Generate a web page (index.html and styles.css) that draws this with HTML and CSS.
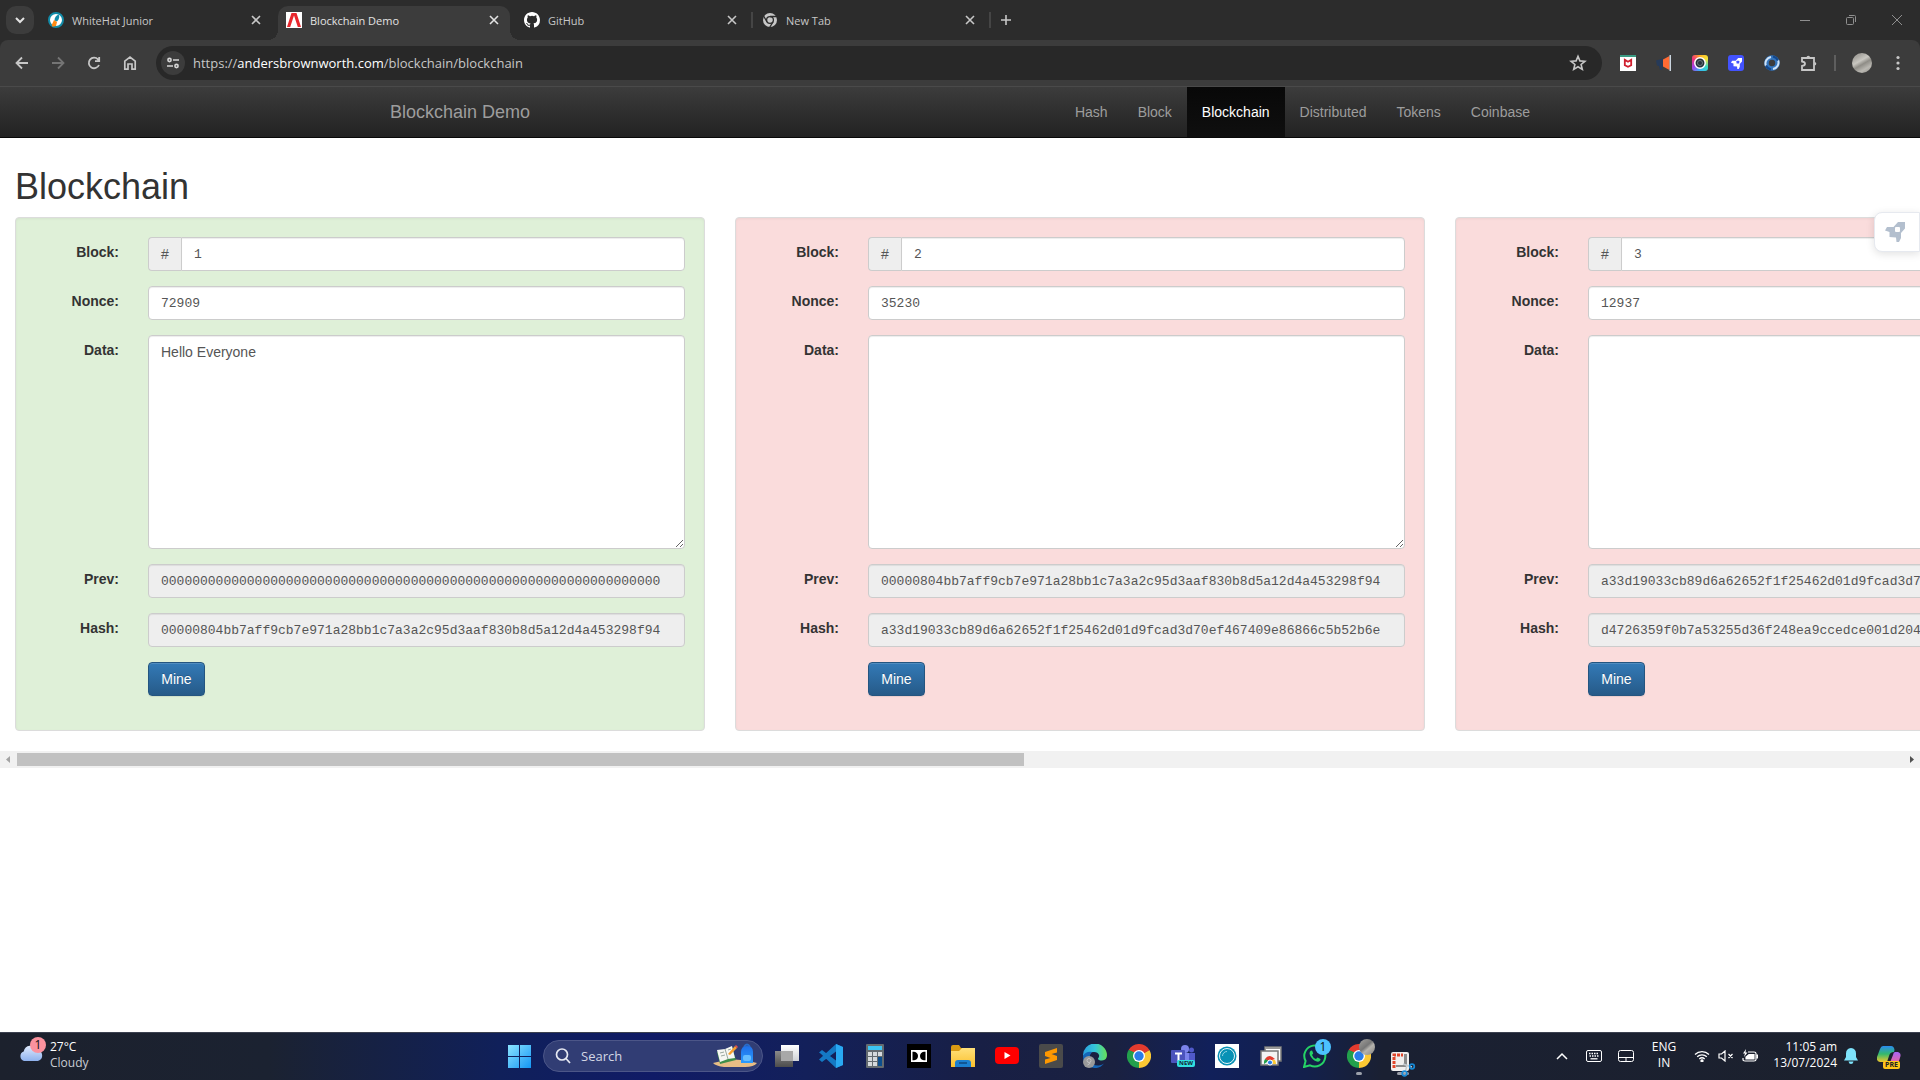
FILE: index.html
```html
<!DOCTYPE html>
<html lang="en">
<head>
<meta charset="utf-8">
<meta name="viewport" content="width=device-width, initial-scale=1">
<title>Blockchain Demo</title>
<link rel="stylesheet" href="styles.css">
</head>
<body>
<svg class="defs" aria-hidden="true">
  <defs>
    <linearGradient id="win" x1="0" y1="0" x2="1" y2="1"><stop offset="0" stop-color="#8be4ff"/><stop offset="1" stop-color="#1496f5"/></linearGradient>
    <linearGradient id="edgeA" x1="0" y1="0" x2="1" y2="0"><stop offset="0" stop-color="#2a9fe0"/><stop offset=".5" stop-color="#35c6d8"/><stop offset="1" stop-color="#66e257"/></linearGradient>
    <linearGradient id="cloud" x1="0" y1="0" x2="0" y2="1"><stop offset="0" stop-color="#dfeafc"/><stop offset="1" stop-color="#8fb2ee"/></linearGradient>
    <linearGradient id="folder" x1="0" y1="0" x2="0" y2="1"><stop offset="0" stop-color="#ffe07a"/><stop offset="1" stop-color="#fbc02d"/></linearGradient>
    <linearGradient id="pilotA" x1="0" y1="0" x2="0" y2="1"><stop offset="0" stop-color="#2a8cf0"/><stop offset=".5" stop-color="#34b96c"/><stop offset="1" stop-color="#f2c82a"/></linearGradient>
    <linearGradient id="pilotB" x1="0" y1="0" x2="0" y2="1"><stop offset="0" stop-color="#a765f5"/><stop offset="1" stop-color="#f5658c"/></linearGradient>
    <linearGradient id="bag" x1="0" y1="0" x2="0" y2="1"><stop offset="0" stop-color="#1f6fe8"/><stop offset="1" stop-color="#2a9bff"/></linearGradient>
    <linearGradient id="paper" x1="0" y1="0" x2="0" y2="1"><stop offset="0" stop-color="#ffffff"/><stop offset="1" stop-color="#cfd2d6"/></linearGradient>
    <linearGradient id="pane" x1="0" y1="0" x2="0" y2="1"><stop offset="0" stop-color="#8a8a8a"/><stop offset="1" stop-color="#4c4c4c"/></linearGradient>
  </defs>
  <symbol id="chrome" viewBox="0 0 24 24">
    <path fill="#e33b2e" d="M12 12 1.600 6A12 12 0 0 1 22.400 6Z"/>
    <path fill="#fcc934" d="M12 12 22.400 6A12 12 0 0 1 12 24Z"/>
    <path fill="#22a04c" d="M12 12 12 24A12 12 0 0 1 1.600 6Z"/>
    <path fill="#e33b2e" d="M12 6H22.400L17.200 9Z"/>
    <path fill="#22a04c" d="M6.800 15 1.600 6 9 9Z"/>
    <path fill="#fcc934" d="M17.200 15 12 24 12 17Z"/>
    <circle cx="12" cy="12" r="6" fill="#fff"/><circle cx="12" cy="12" r="4.700" fill="#2a7de9"/>
  </symbol>
  <symbol id="close" viewBox="0 0 16 16"><path d="m4 4 8 8M12 4l-8 8" stroke="currentColor" stroke-width="1.600" fill="none"/></symbol>
  <symbol id="rocket" viewBox="0 0 20 20"><path fill="currentColor" d="M13 0h7v6.500l-4 4.500v5l-2 4h-2.500l-.5-4.500-6.500-.5v-5L0 8.500 2 5h6.500Z"/><rect x="10" y="5" width="5" height="5" rx="1" fill="var(--hole)"/></symbol>
</svg>

<header class="browser">
  <div class="tabstrip">
    <button class="tab-search" aria-label="Search tabs"><svg width="14" height="14" viewBox="0 0 14 14"><path d="m3 5 4 4 4-4" fill="none" stroke="#e3e3e3" stroke-width="2"/></svg></button>
    <div class="tabs">
      <div class="tab">
        <svg class="fav" viewBox="0 0 16 16"><circle cx="8" cy="8" r="7" fill="#fff" stroke="#128ba8" stroke-width="2"/><path d="M10.500 2.500c1.500 2 .8 4.500-1.500 7L6.500 8.500c0-3 1.500-5 4-6Z" fill="#128ba8"/><path d="m6 8 3 2-1 4-3.500.8-.8-1.800Z" fill="#ff8a14"/></svg>
        <span>WhiteHat Junior</span><button aria-label="Close tab"><svg width="16" height="16"><use href="#close"/></svg></button>
      </div>
      <div class="tab active">
        <svg class="fav" viewBox="0 0 16 16"><path fill="#fff" d="M0 0h16v16H0z"/><path fill="#e8272d" d="M5.500 1h5L15 15h-3.200L8 3.500 4.200 15H1Z"/></svg>
        <span>Blockchain Demo</span><button aria-label="Close tab"><svg width="16" height="16"><use href="#close"/></svg></button>
      </div>
      <div class="tab">
        <svg class="fav" viewBox="0 0 16 16"><path fill="#fff" d="M8 0C3.580 0 0 3.580 0 8c0 3.540 2.290 6.530 5.470 7.590.4.070.55-.17.55-.38 0-.19-.01-.82-.01-1.490-2.010.37-2.530-.49-2.690-.94-.09-.23-.48-.94-.82-1.130-.28-.15-.68-.52-.01-.53.63-.01 1.080.58 1.230.82.72 1.210 1.870.87 2.330.66.070-.52.28-.87.51-1.070-1.780-.2-3.640-.89-3.640-3.950 0-.87.31-1.590.82-2.150-.08-.2-.36-1.020.080-2.120 0 0 .67-.21 2.200.82a7.600 7.600 0 0 1 4 0c1.530-1.040 2.200-.82 2.200-.82.44 1.100.16 1.920.080 2.120.51.56.82 1.270.82 2.150 0 3.070-1.870 3.750-3.650 3.950.29.25.54.73.54 1.480 0 1.070-.01 1.930-.01 2.200 0 .21.15.46.55.38A8 8 0 0 0 16 8c0-4.420-3.580-8-8-8Z"/></svg>
        <span>GitHub</span><button aria-label="Close tab"><svg width="16" height="16"><use href="#close"/></svg></button>
      </div>
      <div class="tab">
        <svg class="fav" viewBox="0 0 16 16"><circle cx="8" cy="8" r="7" fill="#c7c7c7"/><circle cx="8" cy="8" r="3.400" fill="#c7c7c7" stroke="#2c2c2c" stroke-width="1.300"/><path d="M8 4.500h7M5 9.800 1.600 4M11 9.800 7.600 15.500" stroke="#2c2c2c" stroke-width="1.300"/></svg>
        <span>New Tab</span><button aria-label="Close tab"><svg width="16" height="16"><use href="#close"/></svg></button>
      </div>
    </div>
    <button class="new-tab" aria-label="New tab"><svg width="12" height="12"><path d="M6 1v10M1 6h10" stroke="#c7c7c7" stroke-width="1.600"/></svg></button>
    <div class="window-controls">
      <button aria-label="Minimise"><svg width="12" height="12"><path d="M1 6.500h10" stroke="#8f8f8f"/></svg></button>
      <button aria-label="Restore"><svg width="12" height="12" fill="none" stroke="#8f8f8f"><rect x="1.500" y="3.500" width="7" height="7" rx="1"/><path d="M4 1.500h5.500a1 1 0 0 1 1 1V8"/></svg></button>
      <button aria-label="Close"><svg width="12" height="12"><path d="m1 1 10 10M11 1 1 11" stroke="#8f8f8f"/></svg></button>
    </div>
  </div>
  <div class="toolbar">
    <button aria-label="Back"><svg width="16" height="16" fill="none" stroke="#c7c7c7" stroke-width="1.800"><path d="M14 8H3M8 2.500 2.500 8 8 13.500"/></svg></button>
    <button aria-label="Forward"><svg width="16" height="16" fill="none" stroke="#757575" stroke-width="1.800"><path d="M2 8h11M8 2.500 13.500 8 8 13.500"/></svg></button>
    <button aria-label="Reload"><svg width="16" height="16" fill="none" stroke="#c7c7c7" stroke-width="1.800"><path d="M13 10a5.300 5.300 0 1 1-1-5.700l1 1.200M13.200 2v4.200H9"/></svg></button>
    <button aria-label="Home"><svg width="16" height="16" fill="none" stroke="#c7c7c7" stroke-width="1.700"><path d="M2.800 6.200 8 2l5.200 4.200v8H10V9H6v5.200H2.800Z"/></svg></button>
    <div class="omnibox">
      <button class="site-info" aria-label="Site information"><svg width="14" height="14" fill="none" stroke="#d6d6d6" stroke-width="1.600"><circle cx="3.500" cy="4" r="1.600"/><path d="M7 4h6M1 10h6"/><circle cx="10.500" cy="10" r="1.600"/></svg></button>
      <a class="url" href="#">https://<b>andersbrownworth.com</b>/blockchain/blockchain</a>
      <button aria-label="Bookmark this tab"><svg width="18" height="18" viewBox="0 0 18 18"><path d="m9 2.300 1.900 4.600 5 .4-3.800 3.200 1.200 4.900L9 12.800l-4.300 2.600 1.200-4.900L2.100 7.300l5-.4Z" fill="none" stroke="#c7c7c7" stroke-width="1.600"/></svg></button>
    </div>
    <div class="extensions">
      <button aria-label="McAfee"><svg width="16" height="16"><path fill="#fff" d="M0 0h16v16H0z"/><path fill="#3b9b83" d="M0 0h16v2H0z"/><path d="M4.800 4.800 8 6.800l3.200-2v5.400L8 11.800l-3.200-1.600Z" fill="none" stroke="#cf1f2e" stroke-width="1.800"/></svg></button>
      <button aria-label="Announcements"><svg width="16" height="16"><path d="M0 5.500 7 3.500v8.500l-6-1.500Z" fill="#263a59"/><path d="M3 11h4l-1 4H4Z" fill="#263a59"/><path d="M7 4.500 13.500 1v14L7 11.500Z" fill="#ff6a34"/><path d="M13.500 0H15v16h-1.500z" fill="#cad5df"/></svg></button>
      <button aria-label="Camera"><span class="camera"><svg width="16" height="16"><circle cx="8" cy="8" r="5.200" fill="#26343b" stroke="#fff" stroke-width="1.500"/><circle cx="8" cy="8" r="2.500" fill="none" stroke="#69777d"/></svg></span></button>
      <button aria-label="Rocket"><span class="rocket-badge"><svg width="11" height="11"><use href="#rocket"/></svg></span></button>
      <button aria-label="Swirl"><svg width="16" height="16"><circle cx="8" cy="8" r="5.500" fill="none" stroke="#3475bd" stroke-width="4.500"/><path d="M2 11A6.500 6.500 0 0 1 7 2M14 5a6.500 6.500 0 0 1-5 9" fill="none" stroke="#cfe3f7" stroke-width="2"/><path d="M9 1.500a7 7 0 0 1 5 4M7 14.500a7 7 0 0 1-5-4" stroke="#14488c" stroke-width="2" fill="none"/></svg></button>
      <button aria-label="Extensions"><svg width="18" height="18"><path d="M3 4h12v12H3v-4q3-.3 3-2.200T3 7.500Z" fill="none" stroke="#c7c7c7" stroke-width="1.800"/><path d="M7.500 3.500a1.800 1.800 0 0 1 3.600 0ZM15.500 8a1.800 1.800 0 0 1 0 3.600Z" fill="#c7c7c7"/></svg></button>
    </div>
    <button class="avatar" aria-label="Profile"></button>
    <button aria-label="Menu"><svg width="16" height="16" fill="#c7c7c7"><circle cx="8" cy="2.500" r="1.600"/><circle cx="8" cy="8" r="1.600"/><circle cx="8" cy="13.500" r="1.600"/></svg></button>
  </div>
</header>

<nav class="navbar">
  <div class="container">
    <a class="brand" href="#">Blockchain Demo</a>
    <ul>
      <li><a href="#">Hash</a></li>
      <li><a href="#">Block</a></li>
      <li><a class="current" href="#">Blockchain</a></li>
      <li><a href="#">Distributed</a></li>
      <li><a href="#">Tokens</a></li>
      <li><a href="#">Coinbase</a></li>
    </ul>
  </div>
</nav>

<main>
  <h1>Blockchain</h1>
  <div class="chain">
    <form class="well valid">
      <label for="b1n">Block:</label><div class="group"><span>#</span><input id="b1n" value="1"></div>
      <label for="b1o">Nonce:</label><input id="b1o" value="72909">
      <label for="b1d">Data:</label><textarea id="b1d" spellcheck="false">Hello Everyone</textarea>
      <label for="b1p">Prev:</label><input id="b1p" readonly value="0000000000000000000000000000000000000000000000000000000000000000">
      <label for="b1h">Hash:</label><input id="b1h" readonly value="00000804bb7aff9cb7e971a28bb1c7a3a2c95d3aaf830b8d5a12d4a453298f94">
      <button class="mine" type="button">Mine</button>
    </form>
    <form class="well invalid">
      <label for="b2n">Block:</label><div class="group"><span>#</span><input id="b2n" value="2"></div>
      <label for="b2o">Nonce:</label><input id="b2o" value="35230">
      <label for="b2d">Data:</label><textarea id="b2d"></textarea>
      <label for="b2p">Prev:</label><input id="b2p" readonly value="00000804bb7aff9cb7e971a28bb1c7a3a2c95d3aaf830b8d5a12d4a453298f94">
      <label for="b2h">Hash:</label><input id="b2h" readonly value="a33d19033cb89d6a62652f1f25462d01d9fcad3d70ef467409e86866c5b52b6e">
      <button class="mine" type="button">Mine</button>
    </form>
    <form class="well invalid">
      <label for="b3n">Block:</label><div class="group"><span>#</span><input id="b3n" value="3"></div>
      <label for="b3o">Nonce:</label><input id="b3o" value="12937">
      <label for="b3d">Data:</label><textarea id="b3d"></textarea>
      <label for="b3p">Prev:</label><input id="b3p" readonly value="a33d19033cb89d6a62652f1f25462d01d9fcad3d70ef467409e86866c5b52b6e">
      <label for="b3h">Hash:</label><input id="b3h" readonly value="d4726359f0b7a53255d36f248ea9ccedce001d204f">
      <button class="mine" type="button">Mine</button>
    </form>
  </div>
  <div class="scrollbar">
    <button aria-label="Scroll left"><svg width="17" height="17"><path d="M10 5v7L6 8.500Z" fill="#a3a3a3"/></svg></button>
    <div class="track"><div class="thumb"></div></div>
    <button aria-label="Scroll right"><svg width="17" height="17"><path d="M7 5v7l4-3.500Z" fill="#505050"/></svg></button>
  </div>
  <button class="launcher" aria-label="Open launcher"><svg width="20" height="20"><use href="#rocket"/></svg></button>
</main>

<footer class="taskbar">
  <button class="weather">
    <span class="weather-icon"><svg width="24" height="20" viewBox="0 0 24 20"><path d="M5 18a5 5 0 0 1-.3-9.500A7 7 0 0 1 18 7a5.600 5.600 0 0 1 1 11Z" fill="url(#cloud)"/></svg><i>1</i></span>
    <span class="stack">27°C<small>Cloudy</small></span>
  </button>
  <div class="apps">
    <button aria-label="Start"><svg width="23" height="23" fill="url(#win)"><path d="M0 0h11v11H0zM12 0h11v11H12zM0 12h11v11H0zM12 12h11v11H12z"/></svg></button>
    <label class="search">
      <svg width="16" height="16" fill="none" stroke="#e6e9f2" stroke-width="1.700"><circle cx="7" cy="6.500" r="5.500"/><path d="m11 10.500 4 4.500"/></svg>
      <input placeholder="Search" aria-label="Search">
      <svg width="46" height="26" viewBox="0 0 46 26"><path d="M1 20q22-7 44 0-3 4-12 4H12Q4 23 1 20Z" fill="#e7bd85"/><path d="M5 9 20 4l4 13-16 4Z" fill="#3f8f4a"/><path d="m5 7 8-1 7-3 3 12-7 1-8 3Z" fill="#f6f7f3"/><path d="m13 6 3 10M8 10l4-1M9 13l4-1M16 7l3-1" stroke="#9aa7a0"/><path d="M16 11 23 3l2 2-7 7Z" fill="#f79f2e"/><path d="m23 3 1-1 2 2-1 1Z" fill="#e94f4f"/><path d="M32 4q3-5 6 0" fill="none" stroke="#2a6cc7" stroke-width="2"/><path d="M29 9q0-6 6-6t6 6v11H29Z" fill="url(#bag)"/><rect x="31" y="12" width="8" height="6" rx="2" fill="#65bdff"/></svg>
    </label>
    <button aria-label="Task view"><svg width="24" height="22"><path d="M0 6h18v16H0z" fill="url(#pane)"/><path d="M6 0h18v16H6z" fill="url(#paper)"/><path d="M6 6h12v10H6z" fill="#a8a8a8"/></svg></button>
    <button aria-label="Visual Studio Code"><svg width="24" height="24"><path d="M17 0 24 3v18l-7 3L1.500 9.500 0 8.500 3 6l14 10.500v-9L3 18 0 15.500 17 0Z" fill="#1479c4"/><path d="M17 0 24 3v18l-7 3V0Z" fill="#29a9f2"/></svg></button>
    <button aria-label="Calculator"><svg width="18" height="24"><rect width="18" height="24" rx="1" fill="#646b70"/><path d="M2 2h14v4H2z" fill="#3cc4f3"/><path d="M2 8h4v4H2zM7 8h4v4H7zM12 8h4v4h-4zM2 13h4v4H2zM7 13h4v4H7zM2 18h4v4H2zM7 18h4v4H7z" fill="#d6dadd"/><path d="M12 13h4v9h-4z" fill="#0d4f8e"/></svg></button>
    <button aria-label="Dolby Access"><svg width="24" height="24"><path d="M0 0h24v24H0z"/><path d="M4 6h16v12H4z" fill="#fff"/><path d="M5.500 7.500H7q4 1 4 4.500t-4 4.500H5.500ZM18.500 7.500H17q-4 1-4 4.500t4 4.500h1.500Z"/><path d="M4 6.700h16M4 17.300h16" stroke="#fff" stroke-width="1.500"/></svg></button>
    <button aria-label="File Explorer"><svg width="24" height="22"><path d="M0 2q0-2 2-2h6l2 3h10v6H0Z" fill="#d99a13"/><path d="M0 6h8l3-3h13v19H0Z" fill="url(#folder)"/><path d="M4 22v-4q0-3 3-3h10q3 0 3 3v4Z" fill="#1b7fd0"/><path d="M8 18h8" stroke="#115694" stroke-width="2"/></svg></button>
    <button aria-label="YouTube"><svg width="24" height="18"><rect width="24" height="17" rx="4" fill="#f00"/><path d="m9.500 5 6 3.500-6 3.500Z" fill="#fff"/></svg></button>
    <button aria-label="Sublime Text"><svg width="24" height="24"><rect width="24" height="24" rx="2" fill="#4a4a4a"/><path d="m6 8 12-4v4.500L12.500 10 18 12v4L6 20v-4.500l5.500-1.500L6 12Z" fill="#ff9800"/></svg></button>
    <button aria-label="Microsoft Edge"><svg width="24" height="24"><path d="M0 12A12 12 0 0 1 24 11q0 5-5 5.500-4 0-4-2 1.500-1.500 1-3.500-1-3-5-3-6 0-11 4Z" fill="url(#edgeA)"/><path d="M0 12q3-5 9-4-3 3-2 8 2 6 9 5.500 3-.5 5-2-4 5-9.500 4.500Q0 23 0 12Z" fill="#1566b8"/><circle cx="6" cy="18" r="6" fill="#9a9a9a"/><circle cx="6" cy="16.500" r="2" fill="none" stroke="#c4c4c4"/><path d="m4.500 21 3-2" stroke="#c4c4c4"/></svg></button>
    <button aria-label="Google Chrome"><svg width="24" height="24"><use href="#chrome"/></svg></button>
    <button aria-label="Microsoft Teams"><span class="teams"><svg width="24" height="22"><circle cx="14" cy="4" r="4" fill="#7b83eb"/><circle cx="20.500" cy="5" r="2.500" fill="#5059c9"/><path d="M16 8h8v8q-2 4-6 3Z" fill="#5059c9"/><path d="M7 8h11v9q-5 5-10 1Z" fill="#7b83eb"/><rect y="5" width="14" height="13" rx="1" fill="#4b53bc"/><path d="M4 8.500h7M7.500 8.500V16" stroke="#fff" stroke-width="2"/></svg><i>NEW</i></span></button>
    <button aria-label="WhiteHat"><svg width="24" height="24"><path d="M0 0h24v24H0z" fill="#fff"/><circle cx="12" cy="12" r="9.500" fill="#0891b5"/><circle cx="12" cy="12" r="7.500" fill="none" stroke="#e6f5f8"/><path d="M7.500 12A4.500 4.500 0 0 1 12 7.500" fill="none" stroke="#8cd4e4"/></svg></button>
    <button aria-label="Remote Desktop"><svg width="22" height="20"><path d="M5 1h16v14H5z" fill="#fff" stroke="#777" stroke-width="1.500"/><path d="M5 1h16v2H5z" fill="#999"/><path d="M1 5h17v14H1z" fill="#f3f3f3" stroke="#777" stroke-width="1.500"/><path d="M4 18a6 6 0 0 1 1-5l5 1Z" fill="#22a04c"/><path d="M5 13q4-6 10 0l-6 2Z" fill="#e33b2e"/><path d="M10 14h5q1 2 1 4h-6Z" fill="#fcc934"/><circle cx="10" cy="16.500" r="2.500" fill="#2a7de9" stroke="#fff"/></svg></button>
    <button aria-label="WhatsApp"><span class="badged"><svg width="24" height="24"><path d="m1 23 1.600-6A10.500 10.500 0 1 1 7 21.300Z" fill="none" stroke="#25d366" stroke-width="2"/><path d="M8 6.500q-3 2 0 6.500 4 5.500 8 4.500 2-1.500 1.500-2.500l-3-1.500-1.500 1.500q-3-1-4-4l1.200-1.500-1-2.700Z" fill="#25d366"/></svg><i class="count">1</i></span></button>
    <button class="running" aria-label="Google Chrome, profile"><span class="badged"><svg width="24" height="24"><use href="#chrome"/></svg><i class="face"></i></span></button>
    <button class="running" aria-label="Snipping Tool"><svg class="snip" width="26" height="26"><rect x="1" y="1" width="18" height="19" rx="2" fill="#f1efee"/><path d="M4 17V4h9" fill="none" stroke="#e2462b" stroke-width="3" stroke-dasharray="3 1"/><path d="M14 3h3v13H6v-2h8Z" fill="#8b8b8b"/><path d="m13 13 9 3M15 22l2-8" stroke="#c6cbd0" stroke-width="1.500"/><circle cx="22" cy="15.500" r="2.300" fill="none" stroke="#1688d4" stroke-width="1.700"/><circle cx="14.500" cy="22.500" r="2.300" fill="none" stroke="#1688d4" stroke-width="1.700"/></svg></button>
  </div>
  <div class="tray">
    <button aria-label="Hidden icons"><svg width="12" height="12"><path d="m1 9 5-5 5 5" fill="none" stroke="#fff" stroke-width="1.500"/></svg></button>
    <button aria-label="Touch keyboard"><svg width="16" height="12" fill="none" stroke="#fff"><rect x=".5" y=".5" width="15" height="11" rx="1.500"/><path d="M3 3.500h10M3.500 6h10" stroke-width="1.500" stroke-dasharray="1.500 1"/><path d="M4.500 8.800h7" stroke-width="1.300"/></svg></button>
    <button aria-label="Virtual touchpad"><svg width="16" height="12" fill="none" stroke="#fff"><rect x=".5" y=".5" width="15" height="11" rx="2"/><path d="M1 7.500h14M8 7.500V12"/></svg></button>
    <button class="language">ENG<br>IN</button>
    <button class="status" aria-label="Network, sound and battery">
      <svg width="16" height="12" fill="none" stroke="#fff" stroke-width="1.300"><path d="M1 4.500a10 10 0 0 1 14 0M3.200 6.800a7 7 0 0 1 9.600 0M5.300 9a4 4 0 0 1 5.400 0"/><circle cx="8" cy="10.800" r="1" fill="#fff"/></svg>
      <svg width="16" height="12" fill="none" stroke="#fff" stroke-width="1.200"><path d="M1 4h2.500L7 1v10L3.500 8H1ZM10.500 4l4 4M14.500 4l-4 4"/></svg>
      <svg width="16" height="14" fill="none" stroke="#fff" stroke-width="1.200"><path d="M6 3h6q2 0 2 1.500v6q0 1.500-2 1.500H3q-2 0-2-1.500V9"/><path d="M4 10V8l3-2.500h5V10Z" fill="#fff"/><path d="M14.500 6H16v3h-1.500" fill="#fff"/><path d="M4 0 1 4.500h2L2 8l3.500-4.500h-2Z" fill="#fff" stroke="none"/></svg>
    </button>
    <button class="clock">11:05 am<br>13/07/2024</button>
    <button class="bell" aria-label="Notifications"><svg width="14" height="16" fill="#7ee3fb"><path d="M7 0q5 .5 5 5.500V9l2 3.500H0L2 9V5.500Q2 .5 7 0ZM4.500 13.500h5Q9 16 7 16t-2.500-2.500Z"/></svg></button>
    <button class="copilot" aria-label="Copilot"><span><svg width="24" height="20" viewBox="0 0 24 20"><path d="M6 0h8q3 0 3.500 4L17 6q-4 0-5 4l-2 6H3q-4-1-3-5L3 3q1-3 3-3Z" fill="url(#pilotA)"/><path d="M18 6h3q3 1 2.500 4L22 15q-1 4-4 4h-6l2-5 2-5q.500-3 2-3Z" fill="url(#pilotB)"/></svg><i>PRE</i></span></button>
  </div>
</footer>
</body>
</html>
```
FILE: styles.css
```css
* { box-sizing: border-box; }
body {
  margin: 0;
  min-height: 100vh;
  display: flex;
  flex-direction: column;
  overflow-x: hidden;
  background: #fff;
  color: #333;
  font: 14px/20px "Liberation Sans", Arial, sans-serif;
}
button { border: 0; padding: 0; background: none; color: inherit; font: inherit; }
a { color: inherit; text-decoration: none; }
i { font-style: normal; }
svg { display: block; flex: none; }
.defs { position: absolute; width: 0; height: 0; }

/* Browser frame */
.browser { background: #2c2c2c; font-family: "Open Sans", "Noto Sans", sans-serif; }
.browser button { display: flex; align-items: center; justify-content: center; flex: none; }
.tabstrip { display: flex; height: 40px; padding: 6px 0 0 6px; }
.tabstrip .tab-search { width: 28px; height: 28px; border-radius: 10px; background: #3c3c3c; }
.tabs { display: flex; gap: 6px; margin-left: 6px; }
.tab {
  position: relative;
  width: 232px;
  display: flex;
  align-items: center;
  gap: 8px;
  padding: 0 8px 6px;
  color: #c7c7c7;
  font-size: 11px;
}
.tab span { flex: 1; padding-top: 1px; white-space: nowrap; }
.tab.active { background: #3c3c3c; color: #e3e3e3; border-radius: 10px 10px 0 0; }
.tab.active::before, .tab.active::after {
  content: "";
  position: absolute;
  bottom: 0;
  width: 10px;
  height: 10px;
}
.tab.active::before { right: 100%; background: radial-gradient(circle at 0 0, #2c2c2c 10px, #3c3c3c 10px); }
.tab.active::after { left: 100%; background: radial-gradient(circle at 100% 0, #2c2c2c 10px, #3c3c3c 10px); }
.tab:nth-child(n+3)::after {
  content: "";
  position: absolute;
  right: -5px;
  top: 6px;
  width: 2px;
  height: 16px;
  background: #454545;
}
.fav { width: 16px; height: 16px; }
.new-tab { width: 28px; height: 28px; margin-left: 6px; }
.window-controls { display: flex; margin-left: auto; }
.window-controls button { width: 46px; height: 28px; }

.toolbar {
  display: flex;
  align-items: center;
  height: 47px;
  padding: 0 4px;
  background: #3c3c3c;
  border-bottom: 1px solid #4a4a4a;
  border-radius: 8px 8px 0 0;
}
.toolbar > button, .extensions button { width: 36px; height: 34px; }
.omnibox {
  flex: 1;
  height: 34px;
  display: flex;
  align-items: center;
  margin-left: 8px;
  padding: 0 15px 0 5px;
  border-radius: 17px;
  background: #282828;
}
.omnibox .site-info { width: 24px; height: 24px; border-radius: 50%; background: #3c3c3c; }
.url { flex: 1; margin-left: 8px; color: #c7c7c7; font-size: 13px; }
.url b { font-weight: 400; color: #fff; }
.extensions { display: flex; margin-left: 8px; padding-right: 8px; }
.extensions::after { content: ""; width: 2px; height: 16px; margin: 9px 0 0 8px; background: #5e5e5e; }
.camera { border-radius: 3px; background: conic-gradient(#ffb020, #f5e63a, #36d9c6, #35b6f7, #a340e8, #f0327a, #ffb020); }
.rocket-badge { display: grid; place-items: center; width: 16px; height: 16px; border-radius: 3px; background: #4353ff; color: #fff; --hole: #4353ff; }
.toolbar .avatar { width: 20px; height: 20px; margin: 0 8px; border-radius: 50%; background: linear-gradient(150deg, #a7a59f 20%, #c9c7c1 40%, #8f8d87 55%, #bab8b2 75%, #8f8d87); }

/* Site navigation */
.navbar { background: linear-gradient(#3c3c3c, #222); border-bottom: 1px solid #080808; color: #9d9d9d; }
.container { display: flex; justify-content: space-between; max-width: 1170px; margin: 0 auto; }
.navbar a { display: block; padding: 15px; }
.navbar .brand { font-size: 18px; }
.navbar ul { display: flex; margin: 0; padding: 0; list-style: none; }
.navbar .current { color: #fff; background: linear-gradient(#080808, #0f0f0f); }

/* Blocks */
main { flex: 1; position: relative; padding-top: 29px; }
h1 { margin: 0 15px 10px; font-size: 36px; line-height: 40px; font-weight: 400; }
.chain { display: flex; gap: 30px; padding: 0 15px; overflow: hidden; }
.well {
  flex: 0 0 calc(37.5vw - 30px);
  display: grid;
  grid-template-columns: 84px 1fr;
  gap: 15px 29px;
  margin-bottom: 20px;
  padding: 19px 19px 34px;
  border: 1px solid #dcdcdc;
  border-radius: 4px;
  box-shadow: inset 0 1px 3px rgba(0, 0, 0, .05);
}
.valid { background: #dff0d8; }
.invalid { background: #fadcdc; }
.well label { padding-top: 5px; text-align: right; font-weight: 700; }
.well input, .well textarea {
  width: 100%;
  height: 34px;
  margin: 0;
  padding: 6px 12px;
  border: 1px solid #ccc;
  border-radius: 4px;
  background: #fff;
  box-shadow: inset 0 1px 1px rgba(0, 0, 0, .075);
  color: #555;
  font: 13px/20px "Liberation Mono", Consolas, monospace;
}
.well textarea { display: block; height: 214px; font: inherit; }
.well input:read-only { background: #eee; }
.group { display: flex; }
.group span {
  flex: none;
  width: 33px;
  padding: 6px 0;
  border: 1px solid #ccc;
  border-right: 0;
  border-radius: 4px 0 0 4px;
  background: #eee;
  color: #555;
  text-align: center;
}
.group input { border-radius: 0 4px 4px 0; }
.well .mine {
  grid-column: 2;
  justify-self: start;
  width: 57px;
  height: 34px;
  border: 1px solid #245580;
  border-radius: 4px;
  background: linear-gradient(#337ab7, #265a88);
  box-shadow: inset 0 1px 0 rgba(255, 255, 255, .15), 0 1px 1px rgba(0, 0, 0, .075);
  color: #fff;
  text-shadow: 0 -1px 0 rgba(0, 0, 0, .2);
}
.scrollbar { display: flex; height: 17px; background: #f1f1f1; }
.track { flex: 1; padding: 2px 0; }
.thumb { width: 53.4%; height: 13px; background: #c1c1c1; }
.launcher {
  position: absolute;
  top: 74px;
  right: 0;
  width: 46px;
  height: 40px;
  padding-left: 10px;
  border: 1px solid #e6e9ef;
  border-radius: 8px 0 0 8px;
  background: #fff;
  box-shadow: 0 2px 8px rgba(0, 0, 0, .12);
  color: #b3bfce;
  --hole: #fff;
}

/* Taskbar */
.taskbar {
  display: grid;
  grid-template-columns: 1fr auto 1fr;
  height: 48px;
  box-shadow: inset 0 1px #3c4150;
  background: linear-gradient(90deg, #1c212d 0, #1b2231 14%, #10205a 26%, #101b66 34%, #13205a 42%, #181f45 51%, #1a2140 58%, #11205a 63%, #13204c 68%, #1a2032 72%, #1c212d);
  color: #fff;
  font: 12px/16px "Open Sans", "Noto Sans", sans-serif;
}
.weather { display: flex; align-items: center; justify-self: start; padding: 0 0 2px 19px; gap: 7px; text-align: left; }
.weather-icon, .badged, .teams, .copilot span { position: relative; display: block; }
.weather-icon { padding-bottom: 4px; }
.weather-icon i, .count {
  position: absolute;
  width: 16px;
  height: 16px;
  border-radius: 50%;
  background: #fb929e;
  color: #111;
  text-align: center;
}
.weather-icon i { top: -6px; right: -3px; }
.stack small { display: block; font-size: 12px; color: #c9ccd3; }
.apps { display: flex; padding-left: 2px; }
.apps button { display: grid; place-items: center; width: 44px; position: relative; }
.search {
  display: flex;
  align-items: center;
  align-self: center;
  width: 220px;
  height: 32px;
  margin: 0 2px;
  padding: 0 4px 0 11px;
  border: 1px solid #4c5688;
  border-radius: 16px;
  background: #313d74;
}
.search input { flex: 1; min-width: 0; padding: 0 10px; border: 0; background: none; color: #fff; font: 13px/20px "Open Sans", sans-serif; }
.search input::placeholder { color: #d3d7e4; opacity: 1; }
.teams i { position: absolute; left: 6px; top: 15px; padding: 0 2px; border-radius: 2px; background: #31e0e0; color: #123; font: 700 6px/7px "Open Sans", sans-serif; }
.count, .face { position: absolute; top: -5px; right: -4px; }
.count { background: #4cc2ff; }
.face { width: 16px; height: 16px; border-radius: 50%; background: linear-gradient(140deg, #a3a19d, #777 45%, #b5b3ae 60%, #85837f); }
.running::after { content: ""; position: absolute; bottom: 5px; left: 19px; width: 6px; height: 3px; border-radius: 2px; background: #9ba0aa; }
.running:last-child::after { left: 16px; width: 12px; }
.apps .snip { margin-top: 16px; z-index: 1; }
.tray { display: flex; justify-content: flex-end; align-items: stretch; padding-right: 7px; }
.tray button { display: grid; place-items: center; align-content: center; width: 32px; }
.tray .language { display: block; width: 44px; padding-bottom: 2px; text-align: center; }
.tray .status { display: flex; align-items: center; gap: 8px; width: 76px; padding-left: 8px; }
.tray .clock { display: block; width: 75px; padding-bottom: 2px; text-align: right; }
.tray .bell { width: 28px; }
.tray .copilot { width: 48px; }
.copilot i { position: absolute; left: 6px; top: 15px; padding: 0 2px; border-radius: 2px; background: #ffc61a; color: #222; font: 700 7px/8px "Open Sans", sans-serif; }
```
